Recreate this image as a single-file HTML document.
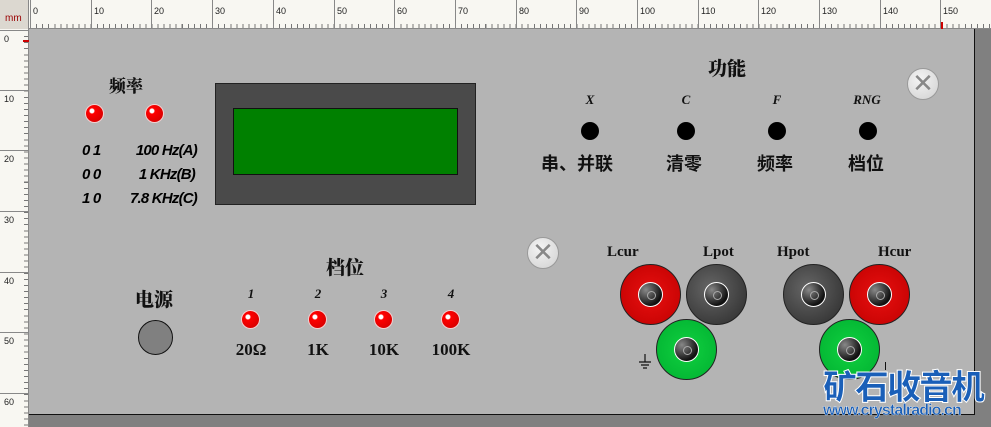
<!DOCTYPE html>
<html><head><meta charset="utf-8"><style>
*{margin:0;padding:0;box-sizing:border-box}
html,body{width:991px;height:427px;overflow:hidden}
body{background:#808080;position:relative;font-family:"Liberation Sans","Noto Sans CJK SC",sans-serif}
.a{position:absolute;white-space:nowrap}
#rt{left:0;top:0;width:991px;height:29px;background:#f8f7f2;border-bottom:1px solid #888}
#rt .t{position:absolute;left:30px;right:0;bottom:0;height:4px;background:repeating-linear-gradient(90deg,#777 0 1px,transparent 1px 6.07px)}
#rl{left:0;top:29px;width:29px;height:398px;background:#f8f7f2;border-right:1px solid #888}
#rl .t{position:absolute;top:1px;bottom:0;right:0;width:4px;background:repeating-linear-gradient(180deg,#777 0 1px,transparent 1px 6.07px)}
.rn{position:absolute;font-size:9px;color:#222}
.vl{position:absolute;top:0;width:1px;height:29px;background:#888}
.hl{position:absolute;left:0;height:1px;width:29px;background:#888}
#panel{left:29px;top:29px;width:946px;height:386px;background:#b4b4b4;border-right:1px solid #111;border-bottom:1px solid #111}
.cn{font-family:"Noto Serif CJK SC","Noto Sans CJK SC",serif;font-weight:900;color:#111}
.led{position:absolute;width:19px;height:19px;border-radius:50%;background:radial-gradient(circle at 35% 35%,#fff 0 2px,#f00 3px,#d00 70%);border:1px solid #f3d0d0}
.dot{position:absolute;width:18px;height:18px;border-radius:50%;background:#000}
.it{position:absolute;white-space:nowrap;font-style:italic;font-weight:bold;font-size:15px;color:#000;font-family:"Liberation Sans",sans-serif;letter-spacing:-0.8px}
.sv{position:absolute;white-space:nowrap;font-family:"Liberation Serif",serif;font-weight:bold;color:#111}
.x{position:absolute;width:32px;height:32px;border-radius:50%;background:radial-gradient(circle at 40% 35%,#f4f4f4,#d0d0d0);border:1px solid #999;color:#888;font-size:26px;line-height:29px;text-align:center}
.term{position:absolute;width:61px;height:61px;border-radius:50%;border:1px solid #222}
.term i{position:absolute;left:17px;top:17px;width:25px;height:25px;border-radius:50%;border:1px solid #fff;background:radial-gradient(circle at 30% 30%,#888,#111 70%)}
.term i:after{content:"";position:absolute;left:8px;top:8px;width:7px;height:7px;border-radius:50%;border:1px solid #aaa}
.red{background:radial-gradient(circle,#e81010,#c00000)}
.blk{background:radial-gradient(circle at 40% 40%,#666,#2a2a2a)}
.grn{background:radial-gradient(circle,#10d040,#00b030)}
</style></head><body>
<div id="rt" class="a"><div class="t"></div>
<div class="a" style="left:0;top:0;width:29px;height:29px;background:#dcd8d0;border-right:1px solid #888"></div>
<div class="rn" style="left:5px;top:13px;color:#900;font-size:10px">mm</div>
<div class="vl" style="left:30px"></div><div class="rn" style="left:33px;top:6px">0</div>
<div class="vl" style="left:91px"></div><div class="rn" style="left:94px;top:6px">10</div>
<div class="vl" style="left:151px"></div><div class="rn" style="left:154px;top:6px">20</div>
<div class="vl" style="left:212px"></div><div class="rn" style="left:215px;top:6px">30</div>
<div class="vl" style="left:273px"></div><div class="rn" style="left:276px;top:6px">40</div>
<div class="vl" style="left:334px"></div><div class="rn" style="left:337px;top:6px">50</div>
<div class="vl" style="left:394px"></div><div class="rn" style="left:397px;top:6px">60</div>
<div class="vl" style="left:455px"></div><div class="rn" style="left:458px;top:6px">70</div>
<div class="vl" style="left:516px"></div><div class="rn" style="left:519px;top:6px">80</div>
<div class="vl" style="left:576px"></div><div class="rn" style="left:579px;top:6px">90</div>
<div class="vl" style="left:637px"></div><div class="rn" style="left:640px;top:6px">100</div>
<div class="vl" style="left:698px"></div><div class="rn" style="left:701px;top:6px">110</div>
<div class="vl" style="left:758px"></div><div class="rn" style="left:761px;top:6px">120</div>
<div class="vl" style="left:819px"></div><div class="rn" style="left:822px;top:6px">130</div>
<div class="vl" style="left:880px"></div><div class="rn" style="left:883px;top:6px">140</div>
<div class="vl" style="left:940px"></div><div class="rn" style="left:943px;top:6px">150</div>
<div class="a" style="left:941px;top:22px;width:2px;height:7px;background:#c00"></div>
</div>
<div id="rl" class="a"><div class="t"></div>
<div class="hl" style="top:1px"></div><div class="rn" style="left:4px;top:5px">0</div>
<div class="hl" style="top:61px"></div><div class="rn" style="left:4px;top:65px">10</div>
<div class="hl" style="top:121px"></div><div class="rn" style="left:4px;top:125px">20</div>
<div class="hl" style="top:182px"></div><div class="rn" style="left:4px;top:186px">30</div>
<div class="hl" style="top:243px"></div><div class="rn" style="left:4px;top:247px">40</div>
<div class="hl" style="top:303px"></div><div class="rn" style="left:4px;top:307px">50</div>
<div class="hl" style="top:364px"></div><div class="rn" style="left:4px;top:368px">60</div>
<div class="a" style="left:23px;top:11px;width:6px;height:2px;background:#c00"></div>
</div>
<div id="panel" class="a"></div>

<div class="cn a" style="left:109px;top:72px;font-size:17px">频率</div>
<div class="led" style="left:85px;top:104px"></div>
<div class="led" style="left:145px;top:104px"></div>
<div class="it" style="left:82px;top:142px">0 1</div>
<div class="it" style="left:100px;top:142px;width:97px;text-align:right">100 Hz(A)</div>
<div class="it" style="left:82px;top:166px">0 0</div>
<div class="it" style="left:100px;top:166px;width:95px;text-align:right">1 KHz(B)</div>
<div class="it" style="left:82px;top:190px">1 0</div>
<div class="it" style="left:100px;top:190px;width:97px;text-align:right">7.8 KHz(C)</div>

<div class="a" style="left:215px;top:83px;width:261px;height:122px;background:#4a4a4a;border:1px solid #222"></div>
<div class="a" style="left:233px;top:108px;width:225px;height:67px;background:#008000;border:1px solid #111"></div>

<div class="cn a" style="left:708px;top:54px;font-size:19px">功能</div>
<div class="sv" style="left:560px;top:92px;width:60px;text-align:center;font-style:italic;font-size:13px">X</div>
<div class="sv" style="left:656px;top:92px;width:60px;text-align:center;font-style:italic;font-size:13px">C</div>
<div class="sv" style="left:747px;top:92px;width:60px;text-align:center;font-style:italic;font-size:13px">F</div>
<div class="sv" style="left:837px;top:92px;width:60px;text-align:center;font-style:italic;font-size:13px">RNG</div>
<div class="dot" style="left:581px;top:122px"></div>
<div class="dot" style="left:677px;top:122px"></div>
<div class="dot" style="left:768px;top:122px"></div>
<div class="dot" style="left:859px;top:122px"></div>
<div class="a" style="left:541px;top:150px;font-size:18px;color:#111;font-family:'Noto Sans CJK SC',sans-serif;font-weight:bold">串、并联</div>
<div class="a" style="left:666px;top:150px;font-size:18px;color:#111;font-family:'Noto Sans CJK SC',sans-serif;font-weight:bold">清零</div>
<div class="a" style="left:757px;top:150px;font-size:18px;color:#111;font-family:'Noto Sans CJK SC',sans-serif;font-weight:bold">频率</div>
<div class="a" style="left:848px;top:150px;font-size:18px;color:#111;font-family:'Noto Sans CJK SC',sans-serif;font-weight:bold">档位</div>
<div class="x" style="left:907px;top:68px">✕</div>
<div class="x" style="left:527px;top:237px">✕</div>

<div class="cn a" style="left:326px;top:253px;font-size:19px">档位</div>
<div class="sv" style="left:241px;top:286px;width:20px;text-align:center;font-style:italic;font-size:13px">1</div>
<div class="sv" style="left:308px;top:286px;width:20px;text-align:center;font-style:italic;font-size:13px">2</div>
<div class="sv" style="left:374px;top:286px;width:20px;text-align:center;font-style:italic;font-size:13px">3</div>
<div class="sv" style="left:441px;top:286px;width:20px;text-align:center;font-style:italic;font-size:13px">4</div>
<div class="led" style="left:241px;top:310px"></div>
<div class="led" style="left:308px;top:310px"></div>
<div class="led" style="left:374px;top:310px"></div>
<div class="led" style="left:441px;top:310px"></div>
<div class="sv" style="left:221px;top:340px;width:60px;text-align:center;font-size:17px">20Ω</div>
<div class="sv" style="left:288px;top:340px;width:60px;text-align:center;font-size:17px">1K</div>
<div class="sv" style="left:354px;top:340px;width:60px;text-align:center;font-size:17px">10K</div>
<div class="sv" style="left:421px;top:340px;width:60px;text-align:center;font-size:17px">100K</div>

<div class="cn a" style="left:135px;top:285px;font-size:19px">电源</div>
<div class="a" style="left:138px;top:320px;width:35px;height:35px;border-radius:50%;background:#808080;border:1px solid #111"></div>

<div class="sv" style="left:607px;top:244px;font-size:15px">Lcur</div>
<div class="sv" style="left:703px;top:244px;font-size:15px">Lpot</div>
<div class="sv" style="left:777px;top:244px;font-size:15px">Hpot</div>
<div class="sv" style="left:878px;top:244px;font-size:15px">Hcur</div>
<div class="term red" style="left:620px;top:264px"><i></i></div>
<div class="term blk" style="left:686px;top:264px"><i></i></div>
<div class="term blk" style="left:783px;top:264px"><i></i></div>
<div class="term red" style="left:849px;top:264px"><i></i></div>
<div class="term grn" style="left:656px;top:319px"><i></i></div>
<div class="term grn" style="left:819px;top:319px"><i></i></div>
<svg class="a" style="left:637px;top:354px" width="16" height="16"><path d="M8 0V8M2 8H14M4 11H12M6 14H10" stroke="#111" stroke-width="1.2"/></svg>
<div class="a" style="left:885px;top:362px;width:1px;height:8px;background:#111"></div>

<div class="a" style="left:823px;top:362px;font-size:34px;font-weight:900;color:#1a5fb8;font-family:'Noto Sans CJK SC',sans-serif;-webkit-text-stroke:1px #fff;letter-spacing:-2px;line-height:46px">矿石收音机</div>
<div class="a" style="left:823px;top:402px;font-size:16px;font-weight:bold;color:#1a5fb8;-webkit-text-stroke:0.3px #fff;letter-spacing:-0.9px">www.crystalradio.cn</div>
</body></html>
